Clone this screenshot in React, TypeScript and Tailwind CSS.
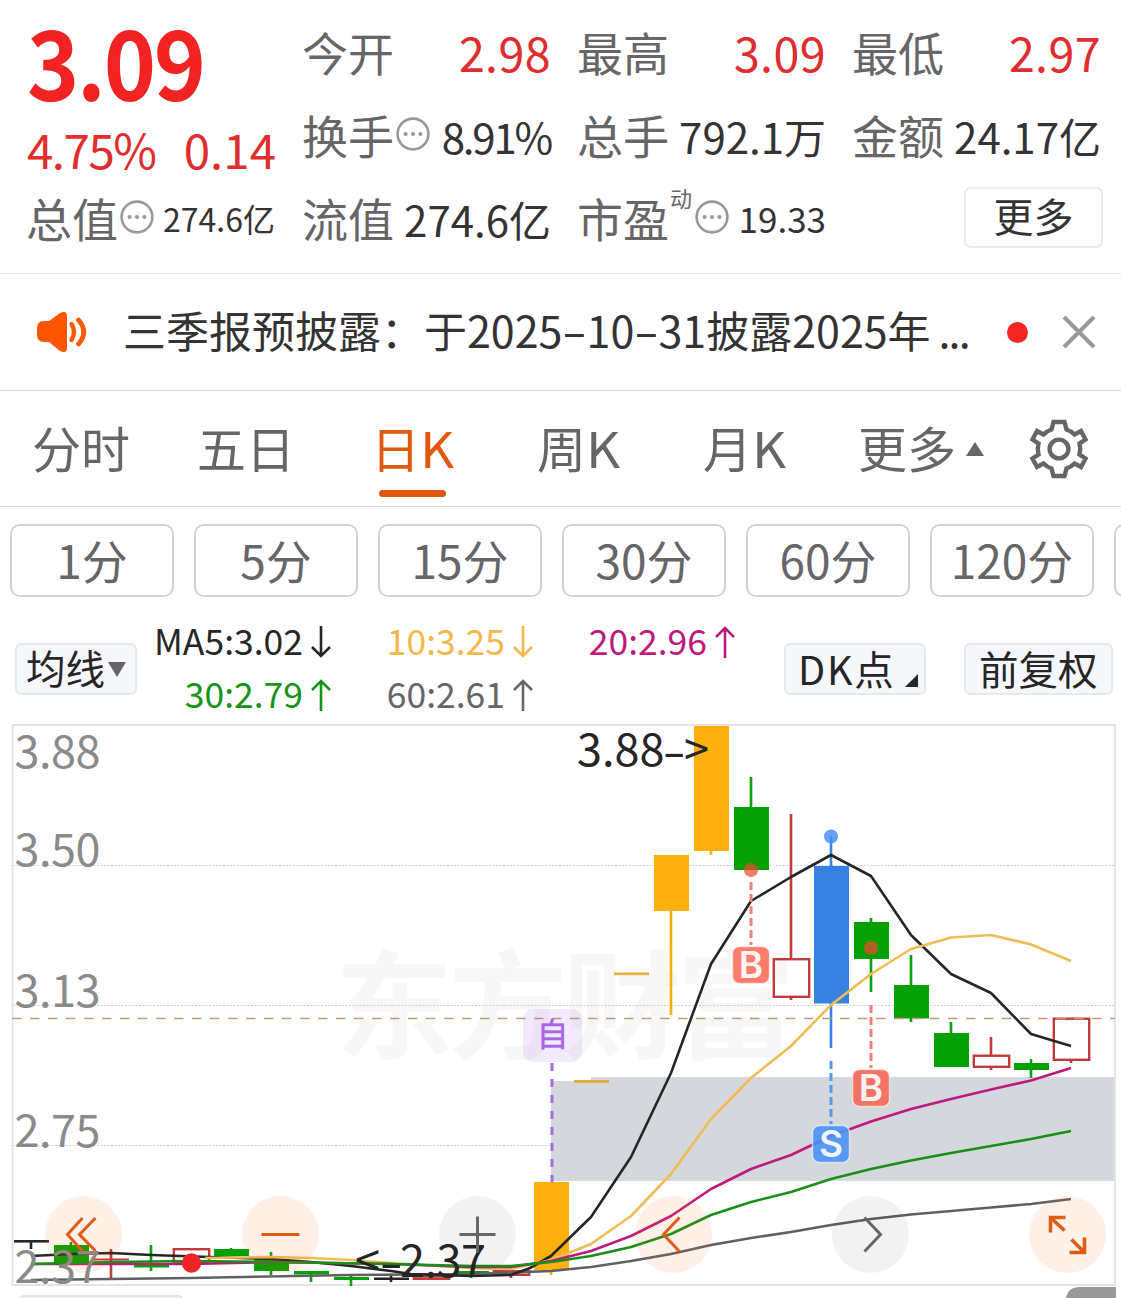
import React from "react";

const Info = () => (
  <svg className="ml-[2px] h-[36px] w-[34px] shrink-0" viewBox="0 0 34 36">
    <circle cx="17" cy="17" r="15.4" fill="none" stroke="#999" strokeWidth="2.6" />
    <circle cx="9.6" cy="17" r="2.1" fill="#999" />
    <circle cx="17" cy="17" r="2.1" fill="#999" />
    <circle cx="24.4" cy="17" r="2.1" fill="#999" />
  </svg>
);

type CellProps = { label: string; info?: boolean; sup?: string; value: string; cls: string };

function Cell({ label, info, sup, value, cls }: CellProps) {
  return (
    <div className="flex h-[83px] items-center justify-between whitespace-nowrap">
      <div className="-ml-px flex items-center">
        <span className="text-[46px] leading-[83px] text-[#666]">{label}</span>
        {sup && <span className="mr-px mb-[42px] ml-px text-[22px] leading-[24px] text-[#666]">{sup}</span>}
        {info && <Info />}
      </div>
      <span className={cls}>{value}</span>
    </div>
  );
}

const red = "origin-right scale-x-[0.98] text-[47.5px] leading-[83px] text-[#e02d2d] tracking-[0.4px]";
const mid = "text-[42px] leading-[83px] pt-px text-[#333]";

function Quote() {
  return (
    <section className="flex h-[274px] gap-[28px] border-b border-[#e9e9e9] pt-[10px] pl-[27px]">
      <div className="w-[248px]">
        <div className="h-[100px] w-[200px] origin-left scale-x-[0.925] text-[96px] leading-[100px] font-bold tracking-[-2.5px] text-[#f12323]">3.09</div>
        <div className="flex h-[66px] justify-between pt-[6px] text-[47.5px] leading-[66px] whitespace-nowrap text-[#e02d2d]">
          <span className="tracking-[-1.5px]">4.75%</span>
          <span className="-mr-px tracking-[0px]">0.14</span>
        </div>
        <Cell label="总值" info value="274.6亿" cls="text-[32px] leading-[83px] text-[#333] pt-px" />
      </div>
      <div className="w-[248px]">
        <Cell label="今开" value="2.98" cls={red} />
        <Cell label="换手" info value="8.91%" cls="text-[42px] leading-[83px] pt-px text-[#333] tracking-[-2.2px]" />
        <Cell label="流值" value="274.6亿" cls={mid} />
      </div>
      <div className="-ml-px w-[248px]">
        <Cell label="最高" value="3.09" cls={red} />
        <Cell label="总手" value="792.1万" cls={mid} />
        <Cell label="市盈" sup="动" info value="19.33" cls="text-[35px] leading-[83px] text-[#333]" />
      </div>
      <div className="-ml-px w-[248px]">
        <Cell label="最低" value="2.97" cls={red} />
        <Cell label="金额" value="24.17亿" cls={mid} />
        <div className="-mr-[2px] flex h-[83px] items-center justify-end">
          <button className="h-[61px] w-[139px] rounded-[7px] border-2 border-[#ebebeb] pb-[4px] text-[40px] leading-[53px] text-[#333]">更多</button>
        </div>
      </div>
    </section>
  );
}

function Notice() {
  const dash = "mx-[4.6px] inline-block scale-x-[1.7]";
  return (
    <section className="flex h-[117px] items-center border-b border-[#d8d8d8] pl-[37px]">
      <svg className="h-[42px] w-[50px]" viewBox="0 0 50 42">
        <path d="M5 10 H12 L23 2 Q30 -1 30 5 V37 Q30 43 23 40 L12 31 H7 Q0 31 0 24 V17 Q0 10 7 10Z" fill="#ff5500" />
        <path d="M34.5 13 Q39.5 21 34.5 29" fill="none" stroke="#ff5a0a" strokeWidth="4.4" strokeLinecap="round" />
        <path d="M41.5 9 Q52 21 41.5 33" fill="none" stroke="#ff5a0a" strokeWidth="4.8" strokeLinecap="round" />
      </svg>
      <div className="ml-[36px] w-[860px] pb-[6px] text-[43px] leading-[60px] whitespace-nowrap text-[#333]">
        三季报预披露：于2025<span className={dash}>-</span>10<span className={dash}>-</span>31披露2025年<span className="tracking-[-1.8px]"> ...</span>
      </div>
      <div className="ml-[24px] size-[21px] rounded-full bg-[#f22424]" />
      <svg className="ml-[34px] h-[34px] w-[34px]" viewBox="0 0 34 34">
        <path d="M2 2 L32 32 M32 2 L2 32" stroke="#999" strokeWidth="4" />
      </svg>
    </section>
  );
}

const WideK = () => <span className="inline-block origin-left scale-x-[1.08]">K</span>;

function Tabs() {
  const t = "text-[49px] leading-[112px] whitespace-nowrap";
  return (
    <nav className="flex h-[116px] border-b border-[#d8d8d8] pl-[32px] text-[#666]">
      <div className={t + " w-[165px]"}>分时</div>
      <div className={t + " w-[174px]"}>五日</div>
      <div className="w-[166px] text-[#e0590e]">
        <div className="h-[99px] text-[49px] leading-[112px] whitespace-nowrap">日<WideK /></div>
        <div className="ml-[8px] h-[7px] w-[67px] rounded-full bg-[#e0560a]" />
      </div>
      <div className={t + " w-[166px]"}>周<WideK /></div>
      <div className={t + " w-[155px]"}>月<WideK /></div>
      <div className={t + " w-[99px]"}>更多</div>
      <svg className="mt-[51px] ml-[9px] h-[14px] w-[18px]" viewBox="0 0 18 14"><path d="M9 0 L18 14 H0Z" fill="#666" /></svg>
      <svg className="mt-[27px] ml-[44px] h-[62px] w-[62px] shrink-0" viewBox="-31 -31 62 62" fill="none" stroke="#666" strokeWidth="4.4">
        <path d="M-5.5 -27H5.5L7.5 -19.5Q12 -18 15.5 -14.5L22 -18L26.5 -9.5L20.5 -5.5Q22 0 20.5 5.5L26.5 9.5L22 18L15.5 14.5Q12 18 7.5 19.5L5.5 27H-5.5L-7.5 19.5Q-12 18 -15.5 14.5L-22 18L-26.5 9.5L-20.5 5.5Q-22 0 -20.5 -5.5L-26.5 -9.5L-22 -18L-15.5 -14.5Q-12 -18 -7.5 -19.5Z" />
        <circle r="9.4" />
      </svg>
    </nav>
  );
}

function Periods() {
  return (
    <div className="flex gap-[20px] overflow-hidden pt-[17px] pl-[10px]">
      {["1分", "5分", "15分", "30分", "60分", "120分", ""].map((p, i) => (
        <div key={i} className="h-[73px] w-[164px] shrink-0 rounded-[10px] border-2 border-[#d2d2d2] text-center text-[46px] leading-[66px] text-[#666]">{p}</div>
      ))}
    </div>
  );
}

function Ma({ text, up, cls }: { text: string; up: boolean; cls: string }) {
  return (
    <div className={"flex h-[53px] items-center justify-end whitespace-nowrap text-[35.5px] leading-[53px] " + cls}>
      <span className="pb-[2px]">{text}</span>
      <svg className="mt-[2px] ml-[8px] h-[32px] w-[20px]" viewBox="0 0 20 32" fill="none" stroke="currentColor" strokeWidth="2.6">
        <path d={up ? "M10 32V2M1 11L10 2L19 11" : "M10 0V30M1 21L10 30L19 21"} />
      </svg>
    </div>
  );
}

function Averages() {
  const box = "relative h-[52px] rounded-[6px] border-2 border-[#e6e9ed] bg-[#f6f7fa] text-[39.5px] leading-[46px] whitespace-nowrap text-[#262626]";
  return (
    <div className="flex h-[123px] items-start">
      <div className={box + " mt-[46px] ml-[15px] flex w-[122px] items-center pl-[9px]"}>
        <span className="pb-[4px]">均线</span>
        <svg className="ml-[3px] h-[15px] w-[18px]" viewBox="0 0 18 15"><path d="M0 0H18L9 15Z" fill="#666" /></svg>
      </div>
      <div className="mt-[17px] ml-[-8px] grid w-[606px] grid-cols-3">
        <Ma text="MA5:3.02" up={false} cls="text-[#262626]" />
        <Ma text="10:3.25" up={false} cls="text-[#f2b84b]" />
        <Ma text="20:2.96" up cls="text-[#bd1a7d]" />
        <Ma text="30:2.79" up cls="text-[#169416]" />
        <Ma text="60:2.61" up cls="text-[#666]" />
      </div>
      <div className={box + " mt-[46px] ml-[49px] w-[142px] pl-[12px]"}>
        <span className="tracking-[1.8px]">DK</span>点
        <svg className="absolute right-[6px] bottom-[6px] h-[13px] w-[13px]" viewBox="0 0 13 13"><path d="M13 0V13H0Z" fill="#262626" /></svg>
      </div>
      <div className={box + " mt-[46px] ml-[38px] w-[149px] pl-[13px]"}>前复权</div>
    </div>
  );
}

type Candle = { x: number; c: string; top: number; bottom: number; hi?: number; lo?: number; hollow?: boolean };
const O = "#ffb00c";
const G = "#04a004";
const R = "#c23a3a";
const K = "#262626";
const candles: Candle[] = [
  { x: 31, c: K, top: 1240, bottom: 1242.6, lo: 1249 },
  { x: 71, c: G, top: 1245, bottom: 1265, hi: 1242 },
  { x: 111, c: R, top: 1258.5, bottom: 1260.5, hi: 1249, lo: 1278 },
  { x: 151, c: G, top: 1264, bottom: 1267.5, hi: 1245, lo: 1271 },
  { x: 191, c: R, top: 1248, bottom: 1264, hollow: true },
  { x: 231, c: G, top: 1249, bottom: 1256, hi: 1248 },
  { x: 271, c: G, top: 1259, bottom: 1271, hi: 1252, lo: 1275 },
  { x: 311, c: G, top: 1271, bottom: 1274.5, lo: 1282 },
  { x: 351, c: G, top: 1277, bottom: 1280, hi: 1275, lo: 1286 },
  { x: 391, c: K, top: 1277.5, bottom: 1280, hi: 1275, lo: 1282 },
  { x: 431, c: R, top: 1275, bottom: 1280, hollow: true },
  { x: 471, c: G, top: 1271, bottom: 1273, lo: 1278 },
  { x: 511, c: R, top: 1270, bottom: 1276, lo: 1278, hollow: true },
  { x: 551, c: O, top: 1182, bottom: 1270, lo: 1275 },
  { x: 591, c: "#e3ae40", top: 1080, bottom: 1083 },
  { x: 631, c: "#e8b242", top: 972.4, bottom: 975.2 },
  { x: 671, c: O, top: 855, bottom: 911, lo: 1015 },
  { x: 711, c: O, top: 726, bottom: 851, lo: 855 },
  { x: 751, c: G, top: 807, bottom: 870, hi: 777 },
  { x: 791, c: R, top: 958, bottom: 998, hi: 814, lo: 1000, hollow: true },
  { x: 831, c: "#3582e4", top: 866, bottom: 1003.5, hi: 836, lo: 1048 },
  { x: 871, c: G, top: 922, bottom: 959, hi: 918, lo: 992 },
  { x: 911, c: G, top: 985, bottom: 1018.5, hi: 955, lo: 1022 },
  { x: 951, c: G, top: 1033, bottom: 1067, hi: 1022 },
  { x: 991, c: R, top: 1054.5, bottom: 1068, hi: 1037, lo: 1070, hollow: true },
  { x: 1031, c: G, top: 1063, bottom: 1070, hi: 1059, lo: 1078 },
  { x: 1071, c: R, top: 1017.5, bottom: 1061, lo: 1063, hollow: true },
];

const lines: [string, string][] = [
  ["#606060", "31,1280 191,1278 351,1275 471,1274 551,1271 591,1267 631,1261 671,1254 711,1245 751,1238 791,1232 831,1225 871,1219 911,1214.5 951,1211 991,1207.5 1031,1204 1071,1199"],
  [K, "31,1256 71,1254 111,1253 151,1255 210,1257 271,1259 311,1262 351,1266 391,1271 411,1274 471,1276 511,1275 530,1268 551,1256 591,1217 631,1157 671,1073 711,964 751,901 791,877 831,855 871,876 911,935 951,974 991,993 1031,1034 1071,1046"],
  ["#f0bc55", "205,1258 271,1257 311,1258 351,1260 391,1263 471,1268 511,1269 551,1260 591,1244 631,1216 671,1174 711,1119 751,1078 791,1046 831,1005 871,974 911,949 951,937.5 991,935 1031,944.5 1071,961"],
  ["#bd1a7d", "31,1264 191,1264 271,1262 391,1264 471,1267 511,1267 551,1261 591,1251 631,1236 671,1216 711,1189 751,1169 791,1155 831,1136 871,1121.5 911,1109 951,1099 991,1089.5 1031,1080.5 1071,1068"],
  ["#188f18", "31,1264 111,1262 191,1261 271,1262 391,1264 471,1266 511,1266 551,1262 591,1256 631,1247 671,1234 711,1215 751,1202 791,1192 831,1179 871,1169 911,1160.5 951,1153 991,1146 1031,1139 1071,1131"],
];

function Badge({ x, y, ch, fill }: { x: number; y: number; ch: string; fill: string }) {
  return (
    <g>
      <rect x={x - 18.5} y={y - 18.5} width="37" height="37" rx="7" fill={fill} stroke="#fff" strokeOpacity="0.6" strokeWidth="1.5" />
      <text x={x} y={y + 13} textAnchor="middle" fontFamily="Inter" fontSize="37" fontWeight="600" fill="#fff" fillOpacity="0.92">{ch}</text>
    </g>
  );
}

function Chart() {
  return (
    <svg className="block h-[578px] w-[1121px]" viewBox="0 720 1121 578">
      <text x="335" y="1050" fontSize="118" fontWeight="bold" textLength="460" fill="#f7f7f7">东方财富</text>
      <path d="M13 865.5H1115M13 1005.5H1115M13 1145.5H1115" stroke="#cfcfcf" strokeWidth="1" strokeDasharray="2 1.5" />
      <path d="M551 1081H591V1077H1115V1181H551Z" fill="#d4d7db" />
      <path d="M12.5 1285V725H1115V1285Z" fill="none" stroke="#e3e3e3" strokeWidth="1.8" />
      {candles.map((k) => (
        <g key={k.x} fill={k.c}>
          {k.hi && <rect x={k.x - 1.3} y={k.hi} width="2.6" height={k.top - k.hi + 1} />}
          {k.lo && <rect x={k.x - 1.3} y={k.bottom - 1} width="2.6" height={k.lo - k.bottom + 1} />}
          {k.hollow
            ? <rect x={k.x - 17.2} y={k.top + 1.2} width="35.4" height={k.bottom - k.top - 2.4} fill="none" stroke={k.c} strokeWidth="2.4" />
            : <rect x={k.x - 17} y={k.top} width="35" height={k.bottom - k.top} />}
        </g>
      ))}
      <path d="M12 1018.5H1115" stroke="#c29a70" strokeWidth="1.3" strokeDasharray="9.5 8.5" />
      {lines.map(([c, p]) => <polyline key={c} points={p} fill="none" stroke={c} strokeWidth="2.6" strokeLinejoin="round" />)}

      <rect x="523" y="1009" width="59" height="53" rx="10" fill="#b06bf2" fillOpacity="0.14" />
      <text x="552.5" y="1046" textAnchor="middle" fontSize="32" fill="#a766e8" stroke="#a766e8" strokeWidth="0.4">自</text>
      <path d="M552 1063V1182" stroke="#a56ae6" strokeWidth="3" strokeDasharray="8 8" />

      <path d="M751 882V945M871 1005V1068" stroke="#ea8275" strokeWidth="3" strokeDasharray="8 4" />
      <path d="M831 1061V1124" stroke="#5a98e8" strokeWidth="3" strokeDasharray="8 4" />
      <circle cx="751" cy="870" r="7" fill="#f04630" fillOpacity="0.72" />
      <circle cx="871" cy="948" r="7" fill="#f04630" fillOpacity="0.72" />
      <circle cx="831" cy="836.5" r="7" fill="#4a90f5" fillOpacity="0.85" />
      <Badge x={751} y={965} ch="B" fill="#fb7d6c" />
      <Badge x={871} y={1088} ch="B" fill="#f17466" />
      <Badge x={831} y={1144} ch="S" fill="#4a92f5e6" />
      <circle cx="191.5" cy="1263" r="9.7" fill="#f22323" />

      <g fontSize="45" fill="#8a8a8a">
        <text x="14.5" y="767.5" textLength="86">3.88</text>
        <text x="14.5" y="866" textLength="86">3.50</text>
        <text x="14.5" y="1007" textLength="86">3.13</text>
        <text x="14.5" y="1147" textLength="86">2.75</text>
        <text x="14.5" y="1283" textLength="86">2.37</text>
      </g>
      <g fontSize="45" fill={K}>
        <text x="577" y="766">3.88</text>
        <text transform="translate(662.5 768) scale(1.5 1)">-</text>
        <text x="684" y="766">&gt;</text>
        <text x="355" y="1277">&lt;</text>
        <text transform="translate(379.5 1279) scale(1.5 1)">-</text>
        <text x="400" y="1277" textLength="86">2.37</text>
      </g>
      <rect x="18.5" y="1296" width="165" height="30" rx="6" fill="#f6f7fa" stroke="#e0e2e8" strokeWidth="2" />
      <path d="M1066 1298Q1068 1287 1080 1287H1116V1298Z" fill="#999" />
    </svg>
  );
}

const controls: { d: string; warm: boolean; w?: number }[] = [
  { d: "M-1 -16.5L-16 0L-1 16.5M12 -16.5L-4 0L12 16.5", warm: true },
  { d: "M-19 0H19", warm: true },
  { d: "M-18 0H18M0 -18V18", warm: false },
  { d: "M6 -17L-10 0L6 17", warm: true },
  { d: "M-6 -17L10 0L-6 17", warm: false },
  { d: "M-17 -2V-17H-2M-16 -16L-3 -4M17 3V18H2M16 17L4 5", warm: true, w: 3.6 },
];

function Controls() {
  return (
    <div className="absolute top-[476px] left-[45px] flex gap-[119.8px]">
      {controls.map((c) => (
        <div key={c.d} className={"size-[77px] shrink-0 rounded-full " + (c.warm ? "bg-[#ff6a1e]/10 text-[#df5c14]" : "bg-black/5 text-[#666]")}>
          <svg className="size-[77px]" viewBox="-38.5 -38.5 77 77">
            <path d={c.d} fill="none" stroke="currentColor" strokeWidth={c.w ?? 3} />
          </svg>
        </div>
      ))}
    </div>
  );
}

export default function App() {
  return (
    <main className="h-[1298px] w-[1121px] overflow-hidden bg-white font-['Noto_Sans_CJK_SC',sans-serif]">
      <Quote />
      <Notice />
      <Tabs />
      <Periods />
      <Averages />
      <div className="relative">
        <Chart />
        <Controls />
      </div>
    </main>
  );
}
